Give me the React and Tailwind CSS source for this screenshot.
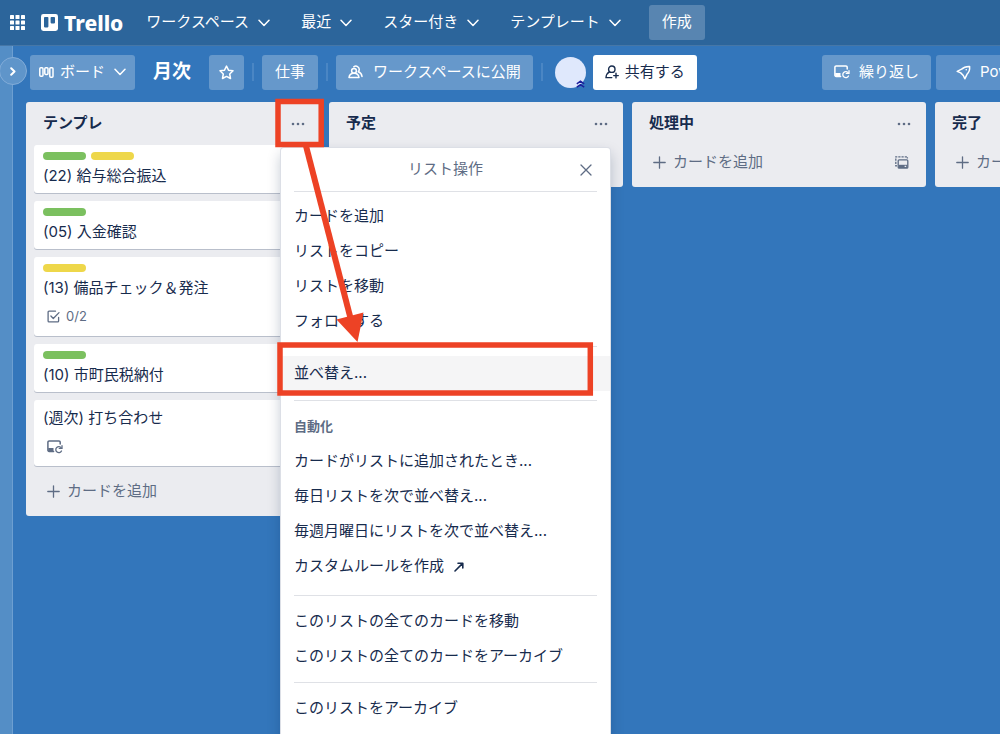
import React from 'react'

const navItems = ['ワークスペース', '最近', 'スター付き', 'テンプレート']

const lists = [
  {
    title: 'テンプレ',
    menuOpen: true,
    composer: true,
    cards: [
      { title: '(22) 給与総合振込', labels: ['green', 'yellow'] },
      { title: '(05) 入金確認', labels: ['green'] },
      { title: '(13) 備品チェック＆発注', labels: ['yellow'], checklist: '0/2' },
      { title: '(10) 市町民税納付', labels: ['green'] },
      { title: '(週次) 打ち合わせ', labels: [], repeat: true }
    ]
  },
  { title: '予定', composer: false, cards: [] },
  { title: '処理中', composer: true, template: true, cards: [] },
  { title: '完了', composer: true, template: true, cards: [] }
]

const labelColors = {
  green: 'bg-[#7bc05f]',
  yellow: 'bg-[#eed74a]'
}

const Chevron = () => (
  <svg width="12" height="8" viewBox="0 0 12 8" fill="none" stroke="currentColor" strokeWidth="1.5" strokeLinecap="round" strokeLinejoin="round" aria-hidden="true">
    <path d="M1 1.2 6 6.5l5-5.3" />
  </svg>
)

const RepeatIcon = () => (
  <svg width="16" height="14" viewBox="0 0 16 14" fill="none" stroke="currentColor" strokeWidth="1.5" strokeLinecap="round" aria-hidden="true">
    <path d="M6.6 11.4H2.1A1.2 1.2 0 0 1 .9 10.2V2.2A1.2 1.2 0 0 1 2.1 1h9.9a1.2 1.2 0 0 1 1.2 1.2V4" />
    <path d="M1.2 8h5.3v3.4H1.2z" fill="currentColor" stroke="none" />
    <path d="M14.3 8A3 3 0 1 0 14.5 11" strokeWidth="1.3" />
    <path d="M15 5.7v2.7h-2.7" strokeWidth="1.3" />
  </svg>
)

const CheckIcon = () => (
  <svg width="13" height="13" viewBox="0 0 13 13" fill="none" stroke="currentColor" strokeWidth="1.3" strokeLinecap="round" strokeLinejoin="round" aria-hidden="true">
    <path d="M8.5 1.2H2a.9.9 0 0 0-.9.9V11a.9.9 0 0 0 .9.9h8.7a.9.9 0 0 0 .9-.9V7.5" />
    <path d="m3.9 6 2.4 2.5L12 2.6" />
  </svg>
)

const PlusIcon = () => (
  <svg width="13" height="13" viewBox="0 0 13 13" stroke="currentColor" strokeWidth="1.3" strokeLinecap="round" aria-hidden="true">
    <path d="M6.5.8v11.4M.8 6.5h11.4" />
  </svg>
)

const DotsIcon = () => (
  <svg width="14" height="4" viewBox="0 0 14 4" fill="currentColor" aria-hidden="true">
    <circle cx="2" cy="2" r="1.3" />
    <circle cx="7" cy="2" r="1.3" />
    <circle cx="12" cy="2" r="1.3" />
  </svg>
)

const TemplateIcon = () => (
  <svg width="14" height="13" viewBox="0 0 14 13" fill="none" stroke="currentColor" strokeWidth="1.3" aria-hidden="true">
    <rect x="3.2" y="3.8" width="9.6" height="8.4" rx="1" />
    <path d="M3.6 8.8h8.8v3.2H3.6z" fill="currentColor" stroke="none" />
    <path d="M9.6 10.4h1.6" stroke="#ebecf0" />
    <path d="M2 9.9H.8V.8h11.6v1.6" strokeDasharray="2.2 1" />
  </svg>
)

const GridIcon = () => (
  <svg width="15" height="15" viewBox="0 0 15 15" fill="currentColor" aria-hidden="true">
    {[0, 5.5, 11].map(y => [0, 5.5, 11].map(x => (
      <rect key={`${x}-${y}`} x={x} y={y} width="4" height="4" rx="0.6" />
    )))}
  </svg>
)

const PersonAddIcon = () => (
  <svg width="14" height="14" viewBox="0 0 14 14" fill="none" stroke="currentColor" strokeWidth="1.4" strokeLinecap="round" aria-hidden="true">
    <circle cx="6.8" cy="4.2" r="3.2" />
    <path d="M4.4 6.8C2.3 7.9 1.2 9.8 1 12.6h5.8M11 8.3v4.6M8.7 10.6h4.6" />
  </svg>
)

const PeopleIcon = () => (
  <svg width="15" height="14" viewBox="0 0 15 14" fill="none" stroke="currentColor" strokeWidth="1.5" strokeLinecap="round" strokeLinejoin="round" aria-hidden="true">
    <circle cx="6" cy="5.8" r="2.4" />
    <path d="M1 12.6c.3-2.8 2-4.4 5-4.4s4.7 1.6 5 4.4z" />
    <path d="M5.8 1.8c2.4-1.7 5.8 0 5.4 3.1-.1.7-.4 1.3-.9 1.9 2.2.8 3.4 2.2 3.7 4.6" />
  </svg>
)

const RocketIcon = () => (
  <svg width="15" height="15" viewBox="0 0 15 15" fill="none" stroke="currentColor" strokeWidth="1.5" strokeLinecap="round" strokeLinejoin="round" aria-hidden="true">
    <path d="M13.6 1.4C10.4 1.3 7.6 2 5.6 4.2L1.2 6.4l3.5 1.5 2.6 2.6 1.5 3.3 2.2-4.5c2.2-2 2.9-4.7 2.6-7.9z" />
    <path d="M10.2 4.8h.1" />
  </svg>
)

const NavBar = () => (
  <header className="flex h-[46px] shrink-0 items-center border-b border-[#4677a7] bg-[#2c659b] pl-[10px] text-[15px] text-white">
    <button aria-label="アプリ" className="mr-4">
      <GridIcon />
    </button>
    <a href="/" className="mr-[23px] flex items-center gap-[6px]">
      <svg width="17" height="17" viewBox="0 0 17 17" aria-hidden="true">
        <rect width="17" height="17" rx="2.4" fill="#fff" />
        <rect x="3" y="3" width="4.4" height="10.4" rx="0.8" fill="#2c659b" />
        <rect x="9.6" y="3" width="4.4" height="6.4" rx="0.8" fill="#2c659b" />
      </svg>
      <span className="font-['Noto_Sans'] text-[21px] leading-6 font-extrabold">Trello</span>
    </a>
    <nav className="flex items-center gap-[31px]">
      {navItems.map(item => (
        <button key={item} className="flex items-center gap-[9px] whitespace-nowrap">
          {item}
          <Chevron />
        </button>
      ))}
    </nav>
    <button className="ml-7 h-[35px] shrink-0 rounded-[3px] bg-[#5885b1] px-[13px]">作成</button>
  </header>
)

const Divider = () => <span className="mx-2 h-[18px] w-[2px] shrink-0 bg-[#4a86c4]" />

const BoardHeader = () => (
  <div className="flex h-14 shrink-0 items-center pb-1 pl-[17px] text-[15px] text-white">
    <button className="flex h-[35px] shrink-0 items-center rounded-[3px] bg-[#6698cb] px-[9px]">
      <svg width="15" height="11" viewBox="0 0 15 11" fill="none" stroke="currentColor" strokeWidth="1.5" className="mr-[6px]" aria-hidden="true">
        <rect x="0.8" y="0.8" width="3.2" height="8.4" rx="1" />
        <rect x="5.8" y="0.8" width="3.2" height="6.8" rx="1" />
        <rect x="10.8" y="0.8" width="3.2" height="9.4" rx="1" />
      </svg>
      <span className="mr-[9px]">ボード</span>
      <Chevron />
    </button>
    <h1 className="mx-[18px] shrink-0 text-[19px] font-bold">月次</h1>
    <button aria-label="スター" className="flex h-[35px] w-[35px] shrink-0 items-center justify-center rounded-[3px] bg-[#6698cb]">
      <svg width="15" height="15" viewBox="0 0 15 15" fill="none" stroke="currentColor" strokeWidth="1.5" strokeLinejoin="round" aria-hidden="true">
        <path d="m7.5 1.1 2 4.1 4.5.6-3.3 3.2.8 4.5-4-2.1-4 2.1.8-4.5L1 5.8l4.5-.6z" />
      </svg>
    </button>
    <Divider />
    <button className="h-[35px] shrink-0 rounded-[3px] bg-[#6698cb] px-[13px]">仕事</button>
    <Divider />
    <button className="flex h-[35px] shrink-0 items-center gap-[10px] rounded-[3px] bg-[#6698cb] px-3">
      <PeopleIcon />
      ワークスペースに公開
    </button>
    <Divider />
    <div className="relative mr-[7px] ml-1 h-[31px] w-[31px] shrink-0 rounded-full bg-[#dfe8fc]">
      <svg width="9" height="8" viewBox="0 0 9 8" fill="none" stroke="#1d1f9c" strokeWidth="1.5" className="absolute right-px bottom-0" aria-hidden="true">
        <path d="m.8 3.8 3.7-2.6 3.7 2.6M.8 7.2l3.7-2.6 3.7 2.6" />
      </svg>
    </div>
    <button className="flex h-[35px] shrink-0 items-center gap-[6px] rounded-[3px] bg-white px-3 text-[#172b4d]">
      <PersonAddIcon />
      共有する
    </button>
    <div className="ml-auto flex w-[178px] shrink-0 gap-[5px] overflow-hidden">
      <button className="flex h-[35px] shrink-0 items-center gap-[9px] rounded-[3px] bg-[#6698cb] px-3">
        <RepeatIcon />
        繰り返し
      </button>
      <button className="flex h-[35px] shrink-0 items-center gap-[9px] rounded-[3px] bg-[#5c91c9] px-5">
        <RocketIcon />
        Power-Up
      </button>
    </div>
  </div>
)

const Card = ({ card }) => (
  <article className="rounded-[3px] bg-white px-[9px] pt-[7px] pb-[6px] shadow-[0_1px_0_#b9bfcb]">
    {card.labels.length > 0 && (
      <div className="mb-[5px] flex gap-[5px]">
        {card.labels.map(label => (
          <span key={label} className={`h-2 w-[43px] rounded-full ${labelColors[label]}`} />
        ))}
      </div>
    )}
    <p className="text-[15px] leading-[22px]">{card.title}</p>
    {(card.checklist || card.repeat) && (
      <div className="mt-[6px] mb-[2px] flex h-[23px] items-center gap-[6px] pl-1 text-[13px] text-[#5e6c84]">
        {card.checklist && <CheckIcon />}
        {card.checklist}
        {card.repeat && <RepeatIcon />}
      </div>
    )}
  </article>
)

const MenuItem = ({ children, active }) => (
  <button className={`flex h-[35px] w-full items-center gap-[10px] px-[13px] text-left whitespace-nowrap ${active ? 'bg-[#f5f5f6]' : ''}`}>
    {children}
  </button>
)

const MenuLine = () => <hr className="mx-[13px] border-[#dfe1e6]" />

const ListMenu = () => (
  <div className="absolute top-[46px] left-[255px] z-10 h-[640px] w-[329px] rounded-[3px] bg-white text-[15px] shadow-[0_0_0_1px_#dcdfe6,0_6px_14px_rgba(9,30,66,0.25)]">
    <div className="relative flex h-[43px] items-center justify-center text-[#5e6c84]">
      リスト操作
      <button aria-label="閉じる" className="absolute right-[18px]">
        <svg width="12" height="12" viewBox="0 0 12 12" stroke="currentColor" strokeWidth="1.3" strokeLinecap="round" aria-hidden="true">
          <path d="m1 1 10 10M11 1 1 11" />
        </svg>
      </button>
    </div>
    <MenuLine />
    <div className="py-[7px]">
      <MenuItem>カードを追加</MenuItem>
      <MenuItem>リストをコピー</MenuItem>
      <MenuItem>リストを移動</MenuItem>
      <MenuItem>フォローする</MenuItem>
    </div>
    <MenuLine />
    <div className="py-[9px]">
      <MenuItem active>並べ替え...</MenuItem>
    </div>
    <MenuLine />
    <div className="pt-2 pb-[11px]">
      <h3 className="px-[13px] text-[13px] leading-[35px] font-bold text-[#5e6c84]">自動化</h3>
      <MenuItem>カードがリストに追加されたとき...</MenuItem>
      <MenuItem>毎日リストを次で並べ替え...</MenuItem>
      <MenuItem>毎週月曜日にリストを次で並べ替え...</MenuItem>
      <MenuItem>
        カスタムルールを作成
        <svg width="10" height="10" viewBox="0 0 10 10" fill="none" stroke="currentColor" strokeWidth="1.6" strokeLinecap="round" strokeLinejoin="round" aria-hidden="true">
          <path d="M1 9 8.6 1.4M4 1.2h4.8V6" />
        </svg>
      </MenuItem>
    </div>
    <MenuLine />
    <div className="py-2">
      <MenuItem>このリストの全てのカードを移動</MenuItem>
      <MenuItem>このリストの全てのカードをアーカイブ</MenuItem>
    </div>
    <MenuLine />
    <div className="py-2">
      <MenuItem>このリストをアーカイブ</MenuItem>
    </div>
  </div>
)

const List = ({ list }) => (
  <section className="relative w-[294px] shrink-0 rounded-[3px] bg-[#ebecf0] px-2 pb-2">
    <div className="flex h-[43px] items-center justify-between pr-[7px] pl-[9px]">
      <h2 className="text-[15px] font-bold">{list.title}</h2>
      <button aria-label="リスト操作" className="text-[#5e6c84]">
        <DotsIcon />
      </button>
    </div>
    <div className="flex flex-col gap-2">
      {list.cards.map(card => (
        <Card key={card.title} card={card} />
      ))}
      <div className="flex h-[34px] items-center justify-between pr-[9px] pl-[13px] text-[15px] text-[#5e6c84]">
        {list.composer && (
          <button className="flex items-center gap-[7px]">
            <PlusIcon />
            カードを追加
          </button>
        )}
        {list.template && <TemplateIcon />}
      </div>
    </div>
    {list.menuOpen && <ListMenu />}
  </section>
)

// Red frames and arrow that point from the list button to the sort item
const Callout = () => (
  <svg className="pointer-events-none absolute top-0 left-0 z-20" width="640" height="420" viewBox="0 0 640 420" fill="none" stroke="#ed4225" aria-hidden="true">
    <rect x="278" y="101.5" width="43.2" height="43" strokeWidth="5.5" />
    <rect x="280" y="345" width="310.3" height="48" strokeWidth="5.5" />
    <path d="M306 146 351 320" strokeWidth="6" />
    <path d="M336.5 319.5 363.5 312.5 357.5 342z" fill="#ed4225" stroke="none" />
  </svg>
)

const App = () => {
  return (
    <div className="relative flex h-screen flex-col overflow-hidden bg-[#3376bb] font-['Inter','Noto_Sans_CJK_JP',sans-serif] text-[#172b4d]">
      <NavBar />
      <div className="flex min-h-0 flex-1">
        <aside className="relative w-[13px] shrink-0 border-r border-[#6d9fd1] bg-[#548ec6]">
          <button aria-label="サイドバーを開く" className="absolute top-[11px] -left-px flex h-7 w-7 items-center justify-center rounded-full border border-[#82acd8] bg-[#5f95ca] text-white">
            <svg width="6" height="9" viewBox="0 0 6 9" fill="none" stroke="currentColor" strokeWidth="2" strokeLinecap="round" strokeLinejoin="round" aria-hidden="true">
              <path d="m1.2 1.2 3.3 3.3-3.3 3.3" />
            </svg>
          </button>
        </aside>
        <main className="flex min-w-0 flex-1 flex-col">
          <BoardHeader />
          <div className="flex flex-1 items-start gap-[9px] pl-[13px]">
            {lists.map(list => (
              <List key={list.title} list={list} />
            ))}
          </div>
        </main>
      </div>
      <Callout />
    </div>
  )
}

export default App
